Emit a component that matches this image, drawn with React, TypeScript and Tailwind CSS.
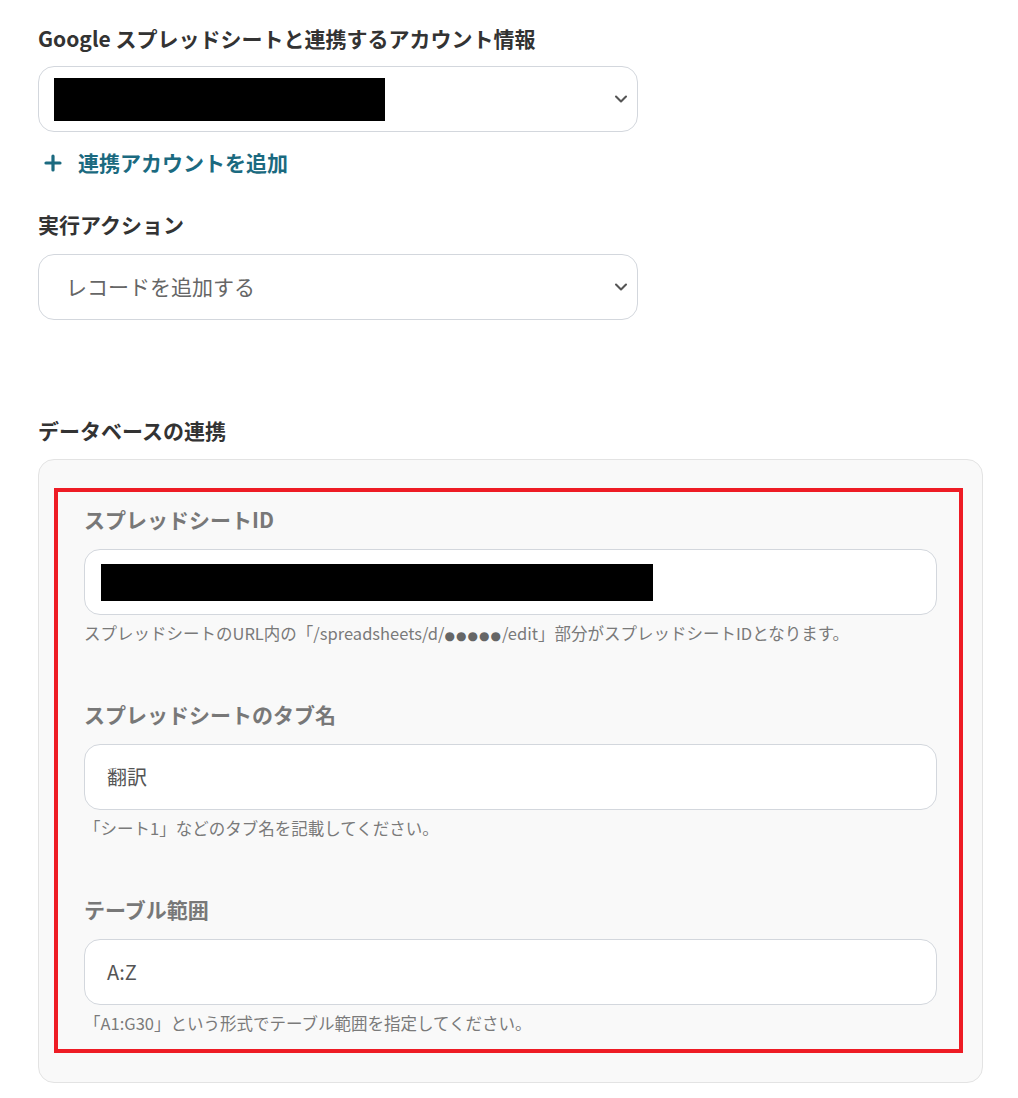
import { Plus, ChevronDown } from 'lucide-react'

const font = { fontFamily: '"Noto Sans CJK JP", "Noto Sans", sans-serif' }

function Field({ label, value, help, redacted }: { label: string; value?: string; help: React.ReactNode; redacted?: boolean }) {
    return (
        <div>
            <div className="h-[30px] text-[21px] leading-[26px] font-bold text-[#787878]">{label}</div>
            <div className="mt-[13px] h-[66px] w-[853px] rounded-[16px] border border-[#d3d7dd] bg-white flex items-center px-[16px]">
                {redacted ? (
                    <div className="h-[37px] w-[552px] bg-black" />
                ) : (
                    <span className="pl-[6px] text-[20px] text-[#555]">{value}</span>
                )}
            </div>
            <div className="mt-[6px] h-[24px] text-[16.5px] leading-[24px] text-[#7a7a7a]">{help}</div>
        </div>
    )
}

export default function App() {
    return (
        <main style={font} className="w-[1018px] min-h-[1098px] bg-white pt-[23px] pl-[38px] text-[#333]">
            <div className="h-[30px] text-[21px] leading-[30px] font-bold">Google スプレッドシートと連携するアカウント情報</div>
            <div className="mt-[13px] h-[66px] w-[600px] rounded-[16px] border border-[#d3d7dd] bg-white flex items-center justify-between pl-[15px] pr-[6px]">
                <div className="h-[43px] w-[331px] bg-black" />
                <ChevronDown size={20} strokeWidth={2.5} className="text-[#555]" />
            </div>
            <button className="mt-[16px] h-[30px] flex items-center gap-[13px] pl-[3px] text-[21px] font-bold text-[#1b6a80]">
                <Plus size={24} strokeWidth={3.2} />
                連携アカウントを追加
            </button>
            <div className="mt-[31px] h-[30px] text-[21px] leading-[30px] font-bold">実行アクション</div>
            <div className="mt-[15px] h-[66px] w-[600px] rounded-[16px] border border-[#d3d7dd] bg-white flex items-center justify-between pl-[27px] pr-[6px]">
                <span className="text-[21px] text-[#666]">レコードを追加する</span>
                <ChevronDown size={20} strokeWidth={2.5} className="text-[#555]" />
            </div>
            <div className="mt-[95px] h-[30px] text-[21px] leading-[30px] font-bold">データベースの連携</div>
            <div className="mt-[14px] w-[945px] rounded-[16px] border border-[#e3e3e3] bg-[#f9f9f9] pt-[28px] pl-[15px] pr-[19px] pb-[29px]">
                <div className="border-[4px] border-[#ee1c25] pt-[14px] pl-[26px] pb-[14px] flex flex-col gap-[56px]">
                    <Field
                        label="スプレッドシートID"
                        help={
                            <>
                                スプレッドシートのURL内の「/spreadsheets/d/
                                <span className="text-[12px] leading-none tracking-[1px] text-[#666]" style={{ fontFamily: '"DejaVu Sans", sans-serif' }}>●●●●●</span>
                                /edit」部分がスプレッドシートIDとなります。
                            </>
                        }
                        redacted
                    />
                    <Field label="スプレッドシートのタブ名" value="翻訳" help="「シート1」などのタブ名を記載してください。" />
                    <Field label="テーブル範囲" value="A:Z" help="「A1:G30」という形式でテーブル範囲を指定してください。" />
                </div>
            </div>
        </main>
    )
}
